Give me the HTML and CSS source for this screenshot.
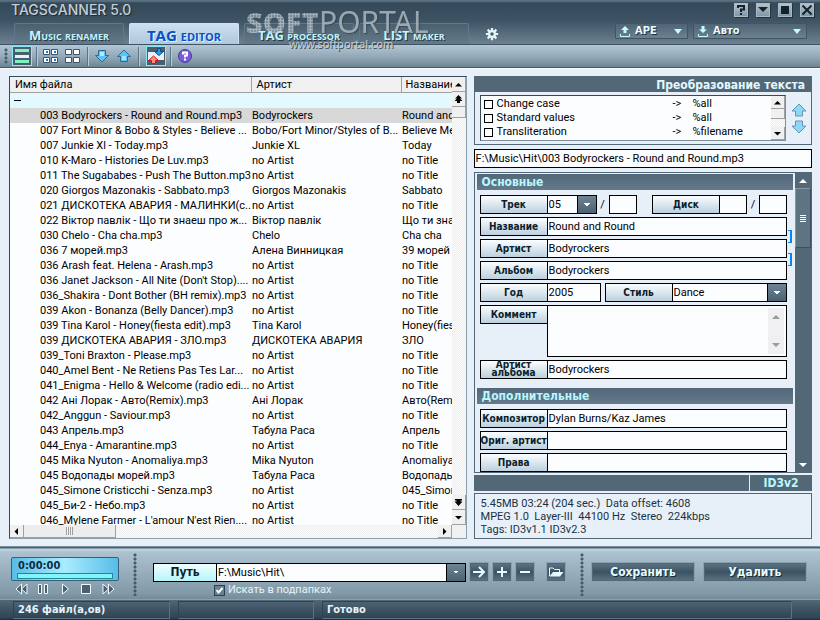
FILE: index.html
```html
<!DOCTYPE html>
<html lang="ru">
<head>
<meta charset="utf-8">
<title>TagScanner 5.0</title>
<link rel="stylesheet" href="styles.css">
</head>
<body>
<header class="top">
  <div class="titlebar">
    <h1 class="brand">TAGSCANNER 5.0</h1>
    <div class="winbtns">
      <button type="button" aria-label="Справка"><svg viewBox="0 0 12 12"><path d="M3 4V2H9V5.500H6V8M6 9V11" fill="none" stroke="#12222e" stroke-width="2"/></svg></button>
      <button type="button" aria-label="Свернуть"><svg viewBox="0 0 12 12"><path d="M1 3H11L6 8Z" fill="#12222e"/></svg></button>
      <button type="button" aria-label="Развернуть"><svg viewBox="0 0 12 12"><path d="M2 2H10V10H2Z" fill="#12222e"/></svg></button>
      <button type="button" aria-label="Закрыть"><svg viewBox="0 0 12 12"><path d="M1.500 1.500L10.500 10.500M10.500 1.500L1.500 10.500" fill="none" stroke="#12222e" stroke-width="2"/></svg></button>
    </div>
  </div>
  <div class="tabrow">
    <nav class="tabs">
      <a href="#renamer" class="tab">Music renamer</a>
      <a href="#editor" class="tab active">TAG editor</a>
      <a href="#processor" class="tab">TAG processor</a>
      <a href="#list" class="tab">LIST maker</a>
    </nav>
    <button type="button" class="gear" aria-label="Настройки"><svg viewBox="0 0 16 16"><g stroke="#e4f4fa" stroke-width="2.500"><path d="M8 1V15M1 8H15M3 3L13 13M13 3L3 13"/></g><circle cx="8" cy="8" r="4.500" fill="#e4f4fa"/><circle cx="8" cy="8" r="2" fill="#465b6b"/></svg></button>
    <div class="drops">
      <button type="button" class="drop ape"><svg class="di" viewBox="0 0 10 11"><path d="M5 0L9 4H6.500V7H3.500V4H1Z" fill="#c4fbff"/><path d="M.5 8V10.500H9.500V8" fill="none" stroke="#c4fbff"/></svg><span>APE</span><svg class="dc" viewBox="0 0 8 5"><path d="M0 0H8L4 5Z" fill="#c4fbff"/></svg></button>
      <button type="button" class="drop auto"><svg class="di" viewBox="0 0 10 11"><path d="M5 7L9 3.500H6.500V0H3.500V3.500H1Z" fill="#c4fbff"/><path d="M.5 8V10.500H9.500V8" fill="none" stroke="#c4fbff"/></svg><span>Авто</span><svg class="dc" viewBox="0 0 8 5"><path d="M0 0H8L4 5Z" fill="#c4fbff"/></svg></button>
    </div>
  </div>
  <div class="mark"><div class="logo"><span class="dotty">SOFT</span><span class="plain">PORTAL</span></div><div class="url">www.softportal.com</div></div>
</header>

<div class="toolbar">
  <span class="grip"></span>
  <button type="button" class="tool on" aria-label="Список"><svg viewBox="0 0 18 18"><path d="M2 2H16V5H2Z" fill="#7ff0c0"/><path d="M2 8H16V11H2Z" fill="#e8f0fa"/><path d="M2 13H16V16H2Z" fill="#7ff0c0"/></svg></button>
  <span class="sep"></span>
  <button type="button" class="tool" aria-label="Выделить всё"><svg viewBox="0 0 18 18"><path d="M1.500 2.500H7.500V7.500H1.500ZM9.500 2.500H15.500V7.500H9.500ZM1.500 10.500H7.500V15.500H1.500ZM9.500 10.500H15.500V15.500H9.500Z" fill="#fff" stroke="#3f5566"/><path d="M4 4H6V6H4ZM12 4H14V6H12ZM4 12H6V14H4ZM12 12H14V14H12Z" fill="#0a78e8"/></svg></button>
  <button type="button" class="tool" aria-label="Снять выделение"><svg viewBox="0 0 18 18"><path d="M1.500 2.500H7.500V7.500H1.500ZM9.500 2.500H15.500V7.500H9.500ZM1.500 10.500H7.500V15.500H1.500ZM9.500 10.500H15.500V15.500H9.500Z" fill="#fff" stroke="#3f5566"/></svg></button>
  <span class="sep"></span>
  <button type="button" class="tool" aria-label="Вниз"><svg viewBox="0 0 18 18"><path d="M5.500 3.500H12.500V8.500H15.500L9 15L2.500 8.500H5.500Z" fill="#5cc4f8" stroke="#2a6a98"/><path d="M7 5H11V9H7Z" fill="#b4ecff"/></svg></button>
  <button type="button" class="tool" aria-label="Вверх"><svg viewBox="0 0 18 18"><path d="M5.500 14.500H12.500V9.500H15.500L9 3L2.500 9.500H5.500Z" fill="#5cc4f8" stroke="#2a6a98"/><path d="M7 9H11V13H7Z" fill="#a4e4ff"/></svg></button>
  <span class="sep"></span>
  <button type="button" class="tool on" aria-label="Автозаполнение"><svg viewBox="0 0 18 18"><path d="M1 5H17V13H1Z" fill="#e8f0f8"/><path d="M10.500 1.500H13.500V4.500H16.500L12 8.500L7.500 4.500H10.500Z" fill="#2a9cf0" stroke="#144a78"/><path d="M4.500 16.500H8.500V13.500H11.500L6.500 9L1.500 13.500H4.500Z" fill="#ff8a7a" stroke="#d01818"/></svg></button>
  <span class="sep"></span>
  <button type="button" class="tool" aria-label="Помощь"><svg viewBox="0 0 18 18"><circle cx="9" cy="9" r="6.500" fill="#7a5ad8" stroke="#4a38a0"/><path d="M7 7.500V5.500H11V8.500H9V10.500M9 11.500V13.500" fill="none" stroke="#fff" stroke-width="2"/></svg></button>
</div>

<main class="work">
  <section class="files">
    <div class="view">
      <table>
        <colgroup><col class="c1"><col class="c2"><col></colgroup>
        <thead><tr><th>Имя файла</th><th>Артист</th><th>Название</th></tr></thead>
        <tbody>
          <tr class="group"><td colspan="3"><i></i></td></tr>
          <tr class="sel"><td>003 Bodyrockers - Round and Round.mp3</td><td>Bodyrockers</td><td>Round and Round</td></tr>
          <tr><td>007 Fort Minor &amp; Bobo &amp; Styles - Believe ...</td><td>Bobo/Fort Minor/Styles of B...</td><td>Believe Me</td></tr>
          <tr><td>007 Junkie Xl - Today.mp3</td><td>Junkie XL</td><td>Today</td></tr>
          <tr><td>010 K-Maro - Histories De Luv.mp3</td><td>no Artist</td><td>no Title</td></tr>
          <tr><td>011 The Sugababes - Push The Button.mp3</td><td>no Artist</td><td>no Title</td></tr>
          <tr><td>020 Giorgos Mazonakis - Sabbato.mp3</td><td>Giorgos Mazonakis</td><td>Sabbato</td></tr>
          <tr><td>021 ДИСКОТЕКА АВАРИЯ - МАЛИНКИ(с...</td><td>no Artist</td><td>no Title</td></tr>
          <tr><td>022 Віктор павлік - Що ти знаеш про ж...</td><td>Віктор павлік</td><td>Що ти знаеш</td></tr>
          <tr><td>030 Chelo - Cha cha.mp3</td><td>Chelo</td><td>Cha cha</td></tr>
          <tr><td>036 7 морей.mp3</td><td>Алена Винницкая</td><td>39 морей</td></tr>
          <tr><td>036 Arash feat. Helena - Arash.mp3</td><td>no Artist</td><td>no Title</td></tr>
          <tr><td>036 Janet Jackson - All Nite (Don't Stop)....</td><td>no Artist</td><td>no Title</td></tr>
          <tr><td>036_Shakira - Dont Bother (BH remix).mp3</td><td>no Artist</td><td>no Title</td></tr>
          <tr><td>039 Akon - Bonanza (Belly Dancer).mp3</td><td>no Artist</td><td>no Title</td></tr>
          <tr><td>039 Tina Karol - Honey(fiesta edit).mp3</td><td>Tina Karol</td><td>Honey(fiesta</td></tr>
          <tr><td>039 ДИСКОТЕКА АВАРИЯ - ЗЛО.mp3</td><td>ДИСКОТЕКА АВАРИЯ</td><td>ЗЛО</td></tr>
          <tr><td>039_Toni Braxton - Please.mp3</td><td>no Artist</td><td>no Title</td></tr>
          <tr><td>040_Amel Bent - Ne Retiens Pas Tes Lar...</td><td>no Artist</td><td>no Title</td></tr>
          <tr><td>041_Enigma - Hello &amp; Welcome (radio edi...</td><td>no Artist</td><td>no Title</td></tr>
          <tr><td>042 Ані Лорак - Авто(Remix).mp3</td><td>Ані Лорак</td><td>Авто(Remix)</td></tr>
          <tr><td>042_Anggun - Saviour.mp3</td><td>no Artist</td><td>no Title</td></tr>
          <tr><td>043 Апрель.mp3</td><td>Табула Раса</td><td>Апрель</td></tr>
          <tr><td>044_Enya - Amarantine.mp3</td><td>no Artist</td><td>no Title</td></tr>
          <tr><td>045 Mika Nyuton - Anomaliya.mp3</td><td>Mika Nyuton</td><td>Anomaliya</td></tr>
          <tr><td>045 Водопады морей.mp3</td><td>Табула Раса</td><td>Водопады</td></tr>
          <tr><td>045_Simone Cristicchi - Senza.mp3</td><td>no Artist</td><td>045_Simone</td></tr>
          <tr><td>045_Би-2 - Небо.mp3</td><td>no Artist</td><td>no Title</td></tr>
          <tr><td>046_Mylene Farmer - L'amour N'est Rien....</td><td>no Artist</td><td>no Title</td></tr>
        </tbody>
      </table>
    </div>
    <div class="vbar">
      <button type="button" class="sb" aria-label="Вверх"><svg viewBox="0 0 9 9"><path d="M1 6.500H8L4.500 3Z"/></svg></button>
      <button type="button" class="sb" aria-label="В начало"><svg viewBox="0 0 9 9"><path d="M4.500 0L8 3.500H6L8.500 6H6V8H3V6H.5L3 3.500H1Z"/></svg></button>
      <div class="thumb"></div>
      <div class="gap"></div>
      <button type="button" class="sb" aria-label="В конец"><svg viewBox="0 0 9 9"><path d="M1 1H8V2.500H6.500V3.500H8.500L4.500 8L.5 3.500H2.500V2.500H1Z"/></svg></button>
      <button type="button" class="sb" aria-label="Вниз"><svg viewBox="0 0 9 9"><path d="M1 3H8L4.500 6.500Z"/></svg></button>
    </div>
    <div class="hbar">
      <button type="button" class="sb" aria-label="Влево"><svg viewBox="0 0 9 9"><path d="M6 1V8L2.500 4.500Z"/></svg></button>
      <div class="hthumb"><i></i></div>
      <div class="gap"></div>
      <button type="button" class="sb" aria-label="Вправо"><svg viewBox="0 0 9 9"><path d="M3 1V8L6.500 4.500Z"/></svg></button>
    </div>
    <div class="corner"></div>
  </section>

  <section class="side">
    <div class="convert">
      <h2>Преобразование текста</h2>
      <div class="cbody">
        <div class="clist">
          <div class="citems">
            <label><input type="checkbox"><span class="n">Change case</span><span class="a">-&gt;</span><span>%all</span></label>
            <label><input type="checkbox"><span class="n">Standard values</span><span class="a">-&gt;</span><span>%all</span></label>
            <label><input type="checkbox"><span class="n">Transliteration</span><span class="a">-&gt;</span><span>%filename</span></label>
          </div>
          <div class="vbar">
            <button type="button" class="sb" aria-label="Вверх"><svg viewBox="0 0 9 9"><path d="M1 6.500H8L4.500 3Z"/></svg></button>
            <div class="thumb"></div>
            <div class="gap"></div>
            <button type="button" class="sb" aria-label="Вниз"><svg viewBox="0 0 9 9"><path d="M1 3H8L4.500 6.500Z"/></svg></button>
          </div>
        </div>
        <div class="carrows">
          <button type="button" aria-label="Выше"><svg viewBox="0 0 16 14"><path d="M4.500 13H11.500V8H15L8 1L1 8H4.500Z" fill="#8cd8f8" stroke="#6a94ac"/></svg></button>
          <button type="button" aria-label="Ниже"><svg viewBox="0 0 16 14"><path d="M4.500 1H11.500V6H15L8 13L1 6H4.500Z" fill="#8cd8f8" stroke="#6a94ac"/></svg></button>
        </div>
      </div>
    </div>

    <input class="field path" aria-label="Путь к файлу" value="F:\Music\Hit\003 Bodyrockers - Round and Round.mp3">

    <div class="editor">
      <form class="form">
        <h3>Основные</h3>
        <div class="rows">
          <div class="row">
            <label class="lb" for="track">Трек</label>
            <span class="combo num"><select id="track"><option>05</option></select></span>
            <span class="slash">/</span><input class="field tiny" aria-label="Всего треков">
            <label class="lb push" for="disc">Диск</label><input class="field tiny" id="disc">
            <span class="slash">/</span><input class="field tiny" aria-label="Всего дисков">
          </div>
          <div class="row"><label class="lb" for="title">Название</label><input class="field" id="title" value="Round and Round"></div>
          <div class="row"><label class="lb" for="artist">Артист</label><input class="field" id="artist" value="Bodyrockers"></div>
          <div class="row"><label class="lb" for="album">Альбом</label><input class="field" id="album" value="Bodyrockers"></div>
          <div class="row">
            <label class="lb" for="year">Год</label><input class="field year" id="year" value="2005">
            <label class="lb" for="genre">Стиль</label><span class="combo"><select id="genre"><option>Dance</option></select></span>
          </div>
          <div class="row note">
            <label class="lb" for="comment">Коммент</label>
            <div class="area"><textarea id="comment"></textarea><div class="ghost"><svg viewBox="0 0 8 4"><path d="M0 4H8L4 0Z"/></svg><svg viewBox="0 0 8 4"><path d="M0 0H8L4 4Z"/></svg></div></div>
          </div>
          <div class="row"><label class="lb two" for="aartist">Артист альбома</label><input class="field" id="aartist" value="Bodyrockers"></div>
          <i class="brk b1"></i><i class="brk b2"></i>
        </div>
        <h3>Дополнительные</h3>
        <div class="rows">
          <div class="row"><label class="lb" for="composer">Композитор</label><input class="field" id="composer" value="Dylan Burns/Kaz James"></div>
          <div class="row"><label class="lb" for="orig">Ориг. артист</label><input class="field" id="orig"></div>
          <div class="row"><label class="lb" for="rights">Права</label><input class="field" id="rights"></div>
        </div>
      </form>
      <div class="darkbar">
        <button type="button" aria-label="Вверх"><svg viewBox="0 0 8 4"><path d="M0 4H8L4 0Z" fill="#fff"/></svg></button>
        <div class="dthumb"><i></i></div>
        <div class="gap"></div>
        <button type="button" aria-label="Вниз"><svg viewBox="0 0 8 4"><path d="M0 0H8L4 4Z" fill="#fff"/></svg></button>
      </div>
    </div>

    <div class="vers"><span></span><button type="button">ID3v2</button></div>
    <div class="info">
      <p>5.45MB 03:24 (204 sec.)&nbsp; Data offset: 4608</p>
      <p>MPEG 1.0&nbsp; Layer-III&nbsp; 44100 Hz&nbsp; Stereo&nbsp; 224kbps</p>
      <p>Tags: ID3v1.1 ID3v2.3</p>
    </div>
  </section>
</main>

<footer class="bottom">
  <div class="player">
    <div class="lcd"><span>0:00:00</span><i></i></div>
    <div class="keys">
      <button type="button" aria-label="Назад"><svg viewBox="0 0 13 12"><path d="M6.500 1V11L1 6ZM12 1V11L6.500 6Z"/></svg></button>
      <button type="button" aria-label="Пауза"><svg viewBox="0 0 13 12"><path d="M1.500 1.500H4.500V10.500H1.500ZM7.500 1.500H10.500V10.500H7.500Z"/></svg></button>
      <button type="button" aria-label="Воспроизвести"><svg viewBox="0 0 13 12"><path d="M3.500 1V11L9.500 6Z"/></svg></button>
      <button type="button" aria-label="Стоп"><svg viewBox="0 0 13 12"><path d="M1.500 1.500H10.500V10.500H1.500Z"/></svg></button>
      <button type="button" aria-label="Вперёд"><svg viewBox="0 0 13 12"><path d="M1 1V11L6.500 6ZM6.500 1V11L12 6Z"/></svg></button>
    </div>
  </div>
  <span class="dots"></span>
  <div class="pathbox">
    <div class="pathrow">
      <label class="plabel" for="dir">Путь</label>
      <span class="combo"><select id="dir"><option>F:\Music\Hit\</option></select></span>
      <div class="sq">
        <button type="button" aria-label="Перейти"><svg viewBox="0 0 16 16"><path d="M2 8H13M8 3L13 8L8 13" fill="none" stroke="#e4fcff" stroke-width="2"/></svg></button>
        <button type="button" aria-label="Добавить"><svg viewBox="0 0 16 16"><path d="M3 8H13M8 3V13" fill="none" stroke="#e4fcff" stroke-width="2"/></svg></button>
        <button type="button" aria-label="Убрать"><svg viewBox="0 0 16 16"><path d="M3 8H13" fill="none" stroke="#e4fcff" stroke-width="2"/></svg></button>
        <button type="button" class="open" aria-label="Открыть папку"><svg viewBox="0 0 16 16"><path d="M1.500 12V4H5L6.500 5.500H11.500V8" fill="none" stroke="#e4fcff"/><path d="M1.500 12.500L5 8H15.500L12 12.500Z" fill="#e4fcff"/></svg></button>
      </div>
    </div>
    <div class="sub"><span class="tick"><input type="checkbox" id="rec" checked><svg viewBox="0 0 11 11"><path d="M2.500 5L4.500 7.500L8.500 3" fill="none" stroke="#fff" stroke-width="2"/></svg></span><label for="rec">Искать в подпапках</label></div>
  </div>
  <span class="dots"></span>
  <div class="acts"><button type="button">Сохранить</button><button type="button">Удалить</button></div>
</footer>
<div class="status"><span class="s1">246 файл(а,ов)</span><span class="s2"></span><span class="s3">Готово</span></div>
</body>
</html>
```
FILE: styles.css
```css
* { box-sizing: border-box; }
:root {
  --ui: "Roboto", "DejaVu Sans Condensed", sans-serif;
  --bold: "DejaVu Sans Condensed", "DejaVu Sans", sans-serif;
  --dark: #536877;
}
body {
  margin: 0;
  height: 100vh;
  display: flex;
  flex-direction: column;
  overflow: hidden;
  background: #e7f0f9;
  color: #000;
  font: 11px/15px var(--ui);
}
button, input, select, textarea { font: inherit; color: inherit; margin: 0; padding: 0; border: 0; border-radius: 0; background: none; }
button { display: flex; align-items: center; justify-content: center; }
h1, h2, h3, p { margin: 0; font-weight: normal; }
svg { display: block; flex: none; }
a { text-decoration: none; }

/* header */
.top { position: relative; background: linear-gradient(#5b7080 0, #5b7080 1px, #344a5a 3px, #3d5363 20px, #6b8090 44px); border-bottom: 1px solid #405463; }
.titlebar { height: 23px; display: flex; justify-content: space-between; align-items: flex-start; padding: 3px 6px 0 11px; }
.brand { font: 500 14px/14px "Inter", sans-serif; color: #c3ced6; text-shadow: 1px 1px 1px #182630; }
.winbtns { display: flex; gap: 8px; }
.winbtns button { width: 14px; height: 14px; background: linear-gradient(#b4c2cc, #8297a5); border: 1px solid #a9bac6; box-shadow: 1px 1px 0 #22323e; }
.winbtns svg { width: 12px; height: 12px; }
.tabrow { display: flex; height: 21px; padding: 0 13px 0 14px; }
.tabs { display: flex; gap: 5px; }
.tab { width: 110px; height: 21px; border: 1px solid #61788a; border-bottom: 0; border-radius: 2px 2px 0 0; background: linear-gradient(#4a606f, #647a8a); color: #c6f4fb; font: bold 13px/22px "Open Sans", "Noto Sans", sans-serif; font-variant: small-caps; text-align: center; text-shadow: 1px 1px 0 #263844; }
.tab.active { background: linear-gradient(#cbdff0, #aec9dc); border-color: #cfe2f1; color: #0650c8; font-size: 15px; text-shadow: 1px 1px 0 #eaf4fc; }
.gear { width: 16px; margin-left: 15px; }
.gear svg { width: 14px; height: 14px; }
.drops { margin-left: auto; display: flex; gap: 5px; }
.drop { height: 16px; border: 1px solid #3f5464; border-radius: 1px; background: linear-gradient(#4f6575, #6b8191); color: #e8fcff; font: bold 11px/14px var(--bold); padding: 0 5px 0 4px; gap: 5px; text-shadow: 1px 1px 0 #20303c; }
.drop span { flex: 1; text-align: left; }
.ape { width: 73px; }
.auto { width: 114px; }
.di { width: 10px; height: 11px; }
.dc { width: 8px; height: 5px; }
.mark { position: absolute; left: 246px; top: 4px; z-index: 2; color: #aab6be; pointer-events: none; }
.logo { display: flex; font: 32px/36px "Noto Sans", sans-serif; opacity: .85; }
.dotty { width: 73px; font-family: "Open Sans", sans-serif; font-weight: 800; font-size: 29px; color: transparent; background: radial-gradient(circle, #b4bfc7 1px, transparent 2px) 0 0 / 3px 3px; -webkit-background-clip: text; background-clip: text; }
.plain { font-size: 30px; text-shadow: 1px 1px 1px #33444f; }
.url { margin: -3px 0 0 43px; font: 11px/14px "Noto Sans", sans-serif; color: #c4ced4; text-shadow: 1px 1px 0 #3a4a55; }

/* toolbar */
.toolbar { height: 23px; display: flex; align-items: center; padding-left: 4px; background: linear-gradient(#b2c7d5, #8fa5b3 60%, #6d8493); border-bottom: 1px solid #42596a; box-shadow: 0 1px 0 #fafdff; }
.grip { width: 4px; height: 16px; margin-right: 4px; background: radial-gradient(circle, #4a5f6e 1px, transparent 2px) 0 0 / 4px 4px; }
.tool { width: 20px; height: 20px; margin-right: 2px; border: 1px solid transparent; }
.tool svg { width: 18px; height: 18px; }
.tool.on { border-color: #8fe6f6; background: #4a5f6e; }
.sep { width: 2px; height: 19px; margin: 0 3px 0 2px; border-left: 1px solid #5d7383; border-right: 1px solid #b8cbd8; }
.sep + .on { margin-left: 3px; }

/* work area */
.work { flex: 1; min-height: 0; display: grid; grid-template-columns: 457fr 338fr; gap: 7px; padding: 8px 8px 7px 9px; }
.files { min-height: 0; min-width: 0; display: grid; grid-template-columns: minmax(0, 1fr) 14px; grid-template-rows: minmax(0, 1fr) 13px; border: 1px solid #8a9fae; border-top-color: #344a58; border-left-color: #344a58; background: #fcfdff; }
.view { overflow: hidden; }
table { width: 100%; border-collapse: collapse; table-layout: fixed; }
.c1 { width: 241px; }
.c2 { width: 150px; }
th, td { height: 15px; padding: 0 0 0 1px; font-weight: normal; text-align: left; line-height: 15px; white-space: nowrap; overflow: hidden; }
th { background: #f0f0f0; padding-left: 5px; border-right: 1px solid #a0a0a0; border-bottom: 1px solid #a0a0a0; }
th:last-child { border-right: 0; padding-left: 4px; }
td:first-child { padding-left: 30px; }
.group td:first-child { padding-left: 4px; background: #e2faff; }
.group i { display: block; width: 7px; height: 1px; background: #000; }
.sel td { background: #d8d8d8; }
.vbar { display: flex; flex-direction: column; min-height: 0; width: 14px; }
.hbar { display: flex; }
.gap { flex: 1; background: repeating-conic-gradient(#ededed 0 25%, #fcfcfc 0 50%) 0 0 / 2px 2px; }
.sb { width: 14px; height: 15px; flex: none; background: #f0f0f0; border: solid #a0a0a0; border-width: 0 1px 1px 0; }
.sb svg { width: 9px; height: 9px; }
.hbar .sb { height: 13px; }
.thumb { height: 11px; flex: none; background: #f0f0f0; border: solid #a0a0a0; border-width: 0 1px 1px 0; }
.hthumb { width: 92px; background: #ededed; border: solid #a0a0a0; border-width: 0 1px 1px 0; display: flex; align-items: center; justify-content: center; }
.hthumb i { width: 7px; height: 8px; background: repeating-linear-gradient(90deg, #a0a0a0 0 1px, #f4f4f4 1px 2px); }
.corner { background: #f0f0f0; }

/* side panel */
.side { min-height: 0; min-width: 0; display: flex; flex-direction: column; }
.convert { border: 1px solid var(--dark); }
.convert h2 { height: 15px; background: var(--dark); color: #e4f8ff; font: bold 12px/16px var(--bold); text-align: right; padding-right: 6px; }
.cbody { display: flex; padding: 3px 4px 3px 5px; gap: 5px; }
.clist { flex: 1; display: flex; height: 46px; border: 1px solid #7c8f9b; border-top-color: #344a58; border-left-color: #344a58; background: #fcfdff; }
.citems { flex: 1; padding: 1px 0 0 3px; }
.citems label { display: flex; align-items: center; height: 14px; line-height: 14px; }
.citems input { appearance: none; width: 9px; height: 9px; border: 1px solid #000; background: #fff; margin-right: 4px; }
.citems .n { width: 176px; }
.citems .a { width: 20px; }
.clist .sb { height: 13px; }
.clist .thumb { height: 10px; }
.carrows { display: flex; flex-direction: column; justify-content: center; gap: 3px; width: 16px; }
.carrows svg { width: 16px; height: 14px; }
.field { flex: 1; min-width: 0; height: 19px; border: 1px solid #000; background: #fcfdff; padding: 0 1px; }
.path { flex: none; width: 100%; margin: 4px 0 4px; }
.editor { flex: 1; min-height: 0; display: flex; border: 1px solid var(--dark); }
.form { flex: 1; min-width: 0; overflow: hidden; padding: 1px 2px 0; }
.form h3 { height: 16px; background: linear-gradient(#52677a, #64798a); color: #b8f8ff; font: bold 12px/16px var(--bold); padding-left: 5px; }
.rows { position: relative; display: flex; flex-direction: column; gap: 3px; padding: 5px 6px 9px 3px; }
.row { display: flex; }
.lb { width: 67px; height: 19px; flex: none; border: 1px solid #000; border-right: 0; background: linear-gradient(#fbfeff, #bcd0dd); color: #0c1e2c; font: bold 10px/17px var(--bold); text-align: center; white-space: nowrap; }
.lb.push { margin-left: auto; }
.lb.two { white-space: normal; line-height: 8px; }
.combo { position: relative; flex: 1; min-width: 0; display: flex; height: 19px; border: 1px solid #000; background: #fcfdff; }
.combo select { flex: 1; min-width: 0; appearance: none; padding: 0 1px; }
.combo::after { content: ""; width: 18px; border-left: 1px solid #000; background: conic-gradient(from -45deg at 50% 100%, #fff 25%, transparent 0) 50% 50% / 6px 3px no-repeat, linear-gradient(#6d8494, #4c6171); pointer-events: none; position: absolute; right: 0; top: 0; bottom: 0; }
.num { flex: none; width: 50px; }
.tiny { flex: none; width: 28px; }
.year { flex: none; width: 54px; margin-right: 4px; }
.slash { width: 12px; text-align: center; line-height: 19px; }
.area { flex: 1; display: flex; height: 52px; border: 1px solid #000; background: #fcfdff; padding: 2px; }
.area textarea { flex: 1; min-width: 0; resize: none; height: 46px; outline: 0; }
.ghost { width: 16px; background: #f0f0f2; display: flex; flex-direction: column; justify-content: space-between; align-items: center; padding: 7px 0; }
.ghost svg { width: 8px; height: 4px; fill: #9a9a9a; }
.brk { position: absolute; right: 1px; width: 4px; height: 13px; border: 1px solid #0a84f0; border-left: 0; border-right-width: 2px; }
.b1 { top: 40px; }
.b2 { top: 63px; }
.darkbar { width: 16px; background: var(--dark); display: flex; flex-direction: column; }
.darkbar button { height: 15px; }
.darkbar svg { width: 8px; height: 4px; }
.darkbar .gap { background: none; }
.dthumb { height: 60px; border: 1px solid #3a4f5d; border-top-color: #8398a6; border-left-color: #8398a6; background: #5e7483; display: flex; align-items: center; justify-content: center; }
.dthumb i { width: 6px; height: 7px; background: repeating-linear-gradient(#fff 0 1px, transparent 1px 2px); }
.vers { display: flex; height: 16px; margin: 2px 0; gap: 1px; }
.vers span { flex: 1; background: var(--dark); }
.vers button { width: 62px; background: var(--dark); color: #b8f8ff; font: bold 12px/16px var(--bold); }
.info { border: 1px solid var(--dark); padding: 3px 6px 2px; color: #1c3040; line-height: 13px; }
.info p { height: 13px; white-space: nowrap; }

/* footer */
.bottom { height: 53px; display: flex; padding: 0 13px 0 11px; background: linear-gradient(#4a6070 0, #4a6070 1px, #c4d6e2 2px, #adc2d0 5px, #8199a8 46px, #748b9a); border-top: 1px solid #7d909d; }
.player { width: 108px; padding-top: 10px; }
.lcd { height: 24px; border: 1px solid #35617a; border-radius: 2px; background: linear-gradient(90deg, #58bce8, #a8ecff 50%, #58bce8); padding: 0 5px; color: #0c2c40; font: bold 11px/15px var(--bold); }
.lcd i { display: block; height: 6px; border: 1px solid #1a8a98; background: #84f4f8; }
.lcd span { display: block; height: 15px; padding-left: 1px; }
.keys { display: flex; justify-content: space-between; padding: 2px 4px 0; }
.keys svg { width: 13px; height: 12px; fill: #4a606f; stroke: #f0f8fc; }
.dots { width: 4px; height: 43px; margin: 6px 14px 0; background: radial-gradient(circle, #465b6a 1px, transparent 2px) 0 0 / 4px 4px; }
.pathbox { flex: 1; min-width: 0; padding: 15px 0 0 2px; }
.pathrow { display: flex; align-items: center; }
.plabel { width: 63px; height: 19px; border: 1px solid #000; border-right: 0; background: linear-gradient(#f0feff, #b4f6fa); font: bold 12px/17px var(--bold); text-align: center; color: #0c1e2c; }
.sq { display: flex; gap: 3px; margin-left: 3px; }
.sq button, .acts button { height: 20px; border: 1px solid #8ca1af; background: linear-gradient(#5f7686, #3c5262 50%, #5d7485); box-shadow: inset 0 0 0 1px #51687a; }
.sq button { width: 20px; }
.sq svg { width: 16px; height: 16px; }
.sq .open { margin-left: 8px; }
.sub { display: flex; align-items: center; margin: 1px 0 0 61px; color: #e8f4fa; line-height: 14px; gap: 3px; }
.tick { display: grid; }
.tick > * { grid-area: 1 / 1; width: 11px; height: 11px; pointer-events: none; }
.tick input { appearance: none; border: 1px solid #2c414f; background: #6a8192; pointer-events: auto; }
.acts { display: flex; gap: 8px; padding-top: 15px; margin-left: -7px; }
.acts button { width: 104px; color: #e4fcff; font: bold 12px/18px var(--bold); text-shadow: 1px 1px 0 #182834; }
.status { height: 21px; display: flex; gap: 8px; padding: 1px 28px 1px 13px; background: linear-gradient(#526878, #3c5161 50%, #304554 90%, #1c2c38); border-top: 1px solid #8ba0ae; color: #e4f4fc; font: bold 11px/16px var(--bold); }
.status span { border: 1px solid #5c7282; border-top-color: #2e4250; border-left-color: #2e4250; padding-left: 4px; height: 18px; }
.s1 { width: 157px; }
.s2 { width: 136px; }
.s3 { flex: 1; }
```
